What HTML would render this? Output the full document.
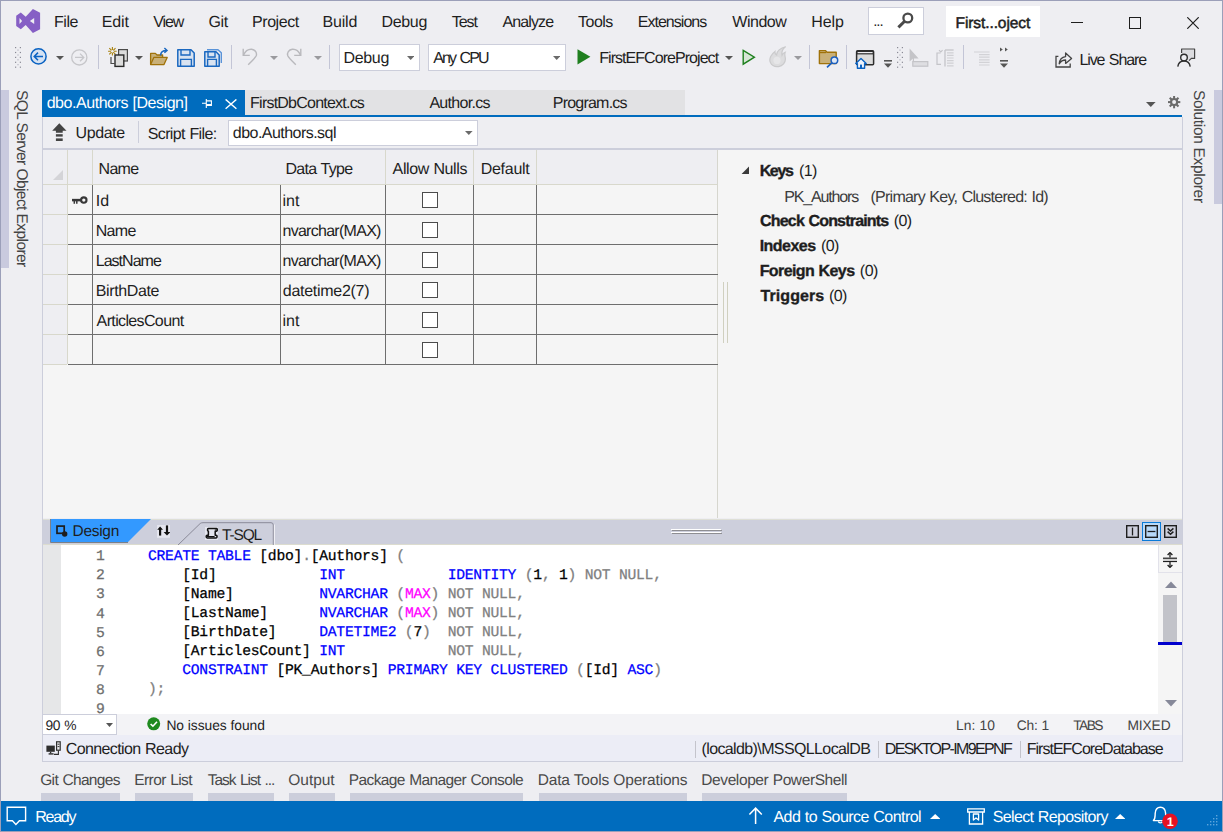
<!DOCTYPE html>
<html><head><meta charset="utf-8"><title>dbo.Authors [Design]</title>
<style>
html,body{margin:0;padding:0}
body{width:1223px;height:832px;overflow:hidden;background:#eeeef2;position:relative;font-family:"Liberation Sans",sans-serif}
.r{position:absolute;box-sizing:border-box}
.t{position:absolute;white-space:pre;font-family:"Liberation Sans",sans-serif;line-height:20px;text-rendering:geometricPrecision}
.m{position:absolute;white-space:pre;font-family:"Liberation Mono",monospace;text-rendering:geometricPrecision;-webkit-text-stroke:0.25px}
.kw{color:#0000ff}.g{color:#808080}.mg{color:#ff00ff}
</style></head><body>
<div class="r" style="left:0px;top:0px;width:1223px;height:832px;background:transparent;border:1px solid #9b9fb9;z-index:50;pointer-events:none;"></div>
<div class="r" style="left:1px;top:90px;width:8px;height:178px;background:#c9cade;"></div>
<div class="r" style="left:1214px;top:90px;width:8px;height:114px;background:#c9cade;"></div>
<div class="r" style="left:868px;top:7px;width:56px;height:28px;background:#ffffff;border:1px solid #cccedb;"></div>
<div class="r" style="left:946px;top:6px;width:94px;height:31px;background:#ffffff;"></div>
<div class="r" style="left:339px;top:44px;width:81px;height:27px;background:#ffffff;border:1px solid #cccedb;"></div>
<div class="r" style="left:428px;top:44px;width:138px;height:27px;background:#ffffff;border:1px solid #cccedb;"></div>
<div class="r" style="left:245px;top:90px;width:440px;height:25px;background:#e2e2e4;"></div>
<div class="r" style="left:42px;top:90px;width:203px;height:27px;background:#006cbe;"></div>
<div class="r" style="left:42px;top:115px;width:1140px;height:2px;background:#006cbe;"></div>
<div class="r" style="left:228px;top:120px;width:250px;height:26px;background:#ffffff;border:1px solid #cccedb;"></div>
<div class="r" style="left:138px;top:121px;width:1px;height:22px;background:#cccedb;"></div>
<div class="r" style="left:43px;top:150px;width:1139px;height:368px;background:#f5f5f5;"></div>
<div class="r" style="left:42px;top:148px;width:1141px;height:2px;background:#cccedb;"></div>
<div class="r" style="left:43px;top:150px;width:674px;height:34px;background:#eeeef2;"></div>
<div class="r" style="left:43px;top:184px;width:24px;height:180px;background:#eeeef2;"></div>
<div class="r" style="left:717px;top:150px;width:1px;height:368px;background:#d6d6ce;"></div>
<div class="r" style="left:722.5px;top:282px;width:1px;height:61px;background:#d0d0c0;"></div>
<div class="r" style="left:727px;top:282px;width:1px;height:61px;background:#d0d0c0;"></div>
<div class="r" style="left:43px;top:184px;width:674px;height:1px;background:#d8d8cc;"></div>
<div class="r" style="left:67px;top:150px;width:1px;height:34px;background:#d8d8cc;"></div>
<div class="r" style="left:92px;top:150px;width:1px;height:34px;background:#d8d8cc;"></div>
<div class="r" style="left:385px;top:150px;width:1px;height:34px;background:#d8d8cc;"></div>
<div class="r" style="left:473px;top:150px;width:1px;height:34px;background:#d8d8cc;"></div>
<div class="r" style="left:536px;top:150px;width:1px;height:34px;background:#d8d8cc;"></div>
<div class="r" style="left:67px;top:184px;width:1px;height:180px;background:#d8d8cc;"></div>
<div class="r" style="left:43px;top:214px;width:24px;height:1px;background:#d8d8cc;"></div>
<div class="r" style="left:68px;top:214px;width:650px;height:1px;background:#6e6e6e;"></div>
<div class="r" style="left:43px;top:244px;width:24px;height:1px;background:#d8d8cc;"></div>
<div class="r" style="left:68px;top:244px;width:650px;height:1px;background:#6e6e6e;"></div>
<div class="r" style="left:43px;top:274px;width:24px;height:1px;background:#d8d8cc;"></div>
<div class="r" style="left:68px;top:274px;width:650px;height:1px;background:#6e6e6e;"></div>
<div class="r" style="left:43px;top:304px;width:24px;height:1px;background:#d8d8cc;"></div>
<div class="r" style="left:68px;top:304px;width:650px;height:1px;background:#6e6e6e;"></div>
<div class="r" style="left:43px;top:334px;width:24px;height:1px;background:#d8d8cc;"></div>
<div class="r" style="left:68px;top:334px;width:650px;height:1px;background:#6e6e6e;"></div>
<div class="r" style="left:43px;top:364px;width:24px;height:1px;background:#d8d8cc;"></div>
<div class="r" style="left:68px;top:364px;width:650px;height:1px;background:#6e6e6e;"></div>
<div class="r" style="left:92px;top:185px;width:1px;height:180px;background:#6e6e6e;"></div>
<div class="r" style="left:280px;top:185px;width:1px;height:180px;background:#6e6e6e;"></div>
<div class="r" style="left:385px;top:185px;width:1px;height:180px;background:#6e6e6e;"></div>
<div class="r" style="left:473px;top:185px;width:1px;height:180px;background:#6e6e6e;"></div>
<div class="r" style="left:536px;top:185px;width:1px;height:180px;background:#6e6e6e;"></div>
<svg class="r" style="left:53px;top:170px;" width="11" height="11" viewBox="0 0 11 11"><path d="M10 0V10H0Z" fill="#d4d4d8"/></svg>
<div class="r" style="left:422px;top:192px;width:16px;height:16px;background:#ffffff;border:1px solid #4c4c4c;"></div>
<div class="r" style="left:422px;top:222px;width:16px;height:16px;background:#ffffff;border:1px solid #4c4c4c;"></div>
<div class="r" style="left:422px;top:252px;width:16px;height:16px;background:#ffffff;border:1px solid #4c4c4c;"></div>
<div class="r" style="left:422px;top:282px;width:16px;height:16px;background:#ffffff;border:1px solid #4c4c4c;"></div>
<div class="r" style="left:422px;top:312px;width:16px;height:16px;background:#ffffff;border:1px solid #4c4c4c;"></div>
<div class="r" style="left:422px;top:342px;width:16px;height:16px;background:#ffffff;border:1px solid #4c4c4c;"></div>
<div class="r" style="left:43px;top:519px;width:1139px;height:26px;background:#cdcfdc;"></div>
<div class="r" style="left:43px;top:519px;width:1139px;height:1px;background:#dedfd6;"></div>
<div class="r" style="left:43px;top:544px;width:1139px;height:1px;background:#dcdccf;"></div>
<svg class="r" style="left:50px;top:519px;" width="102" height="24" viewBox="0 0 102 24"><path d="M1 0H101L78 23H1Z" fill="#3399ff"/><path d="M0.5 0V23.5H78" fill="none" stroke="#7c8088" stroke-width="1"/></svg>
<svg class="r" style="left:176px;top:522px;" width="100" height="24" viewBox="0 0 100 24"><path d="M1 24L24.2 1.5Q25 0.7 27 0.7H95Q97.3 0.7 97.3 3V24" fill="none" stroke="#8a8a98" stroke-width="1"/><path d="M98.4 2.5V24" stroke="#f4f4f8" stroke-width="1"/></svg>
<div class="r" style="left:671px;top:529px;width:50px;height:1px;background:#ffffff;"></div>
<div class="r" style="left:672px;top:530px;width:50px;height:1px;background:#8e8e92;"></div>
<div class="r" style="left:671px;top:532px;width:50px;height:1px;background:#ffffff;"></div>
<div class="r" style="left:672px;top:533px;width:50px;height:1px;background:#8e8e92;"></div>
<div class="r" style="left:43px;top:545px;width:1139px;height:169px;background:#ffffff;"></div>
<div class="r" style="left:43px;top:545px;width:18px;height:169px;background:#e6e7e8;"></div>
<div class="r" style="left:1158px;top:545px;width:24px;height:169px;background:#f5f5f5;"></div>
<div class="r" style="left:1158px;top:545px;width:1px;height:28px;background:#e2e2ea;"></div>
<div class="r" style="left:1158px;top:572px;width:24px;height:1px;background:#e2e2ea;"></div>
<div class="r" style="left:1163px;top:595px;width:14px;height:47px;background:#c2c3c9;"></div>
<div class="r" style="left:1158px;top:642px;width:24px;height:3px;background:#0000cd;"></div>
<svg class="r" style="left:1165px;top:581px;" width="12" height="7" viewBox="0 0 12 7"><path d="M0 7L6 0.5L12 7Z" fill="#868999"/></svg>
<svg class="r" style="left:1165px;top:700px;" width="12" height="7" viewBox="0 0 12 7"><path d="M0 0L6 6.5L12 0Z" fill="#868999"/></svg>
<div class="r" style="left:43px;top:735px;width:1139px;height:26px;background:#ecedf6;"></div>
<div class="r" style="left:695px;top:741px;width:1px;height:17px;background:#c4c4cc;"></div>
<div class="r" style="left:878px;top:741px;width:1px;height:17px;background:#c4c4cc;"></div>
<div class="r" style="left:1020px;top:741px;width:1px;height:17px;background:#c4c4cc;"></div>
<div class="r" style="left:42px;top:117px;width:1141px;height:645px;background:transparent;border:1px solid #cccedb;border-top:none;z-index:20;"></div>
<div class="r" style="left:41px;top:793px;width:79px;height:8px;background:#cccedb;"></div>
<div class="r" style="left:135px;top:793px;width:58px;height:8px;background:#cccedb;"></div>
<div class="r" style="left:208px;top:793px;width:66px;height:8px;background:#cccedb;"></div>
<div class="r" style="left:289px;top:793px;width:46px;height:8px;background:#cccedb;"></div>
<div class="r" style="left:350px;top:793px;width:173px;height:8px;background:#cccedb;"></div>
<div class="r" style="left:539px;top:793px;width:148px;height:8px;background:#cccedb;"></div>
<div class="r" style="left:702px;top:793px;width:145px;height:8px;background:#cccedb;"></div>
<div class="r" style="left:0px;top:801px;width:1223px;height:31px;background:#006cbe;"></div>
<div class="t" style="left:53.92px;top:13px;font-size:16px;letter-spacing:-0.413px;color:#1e1e1e;">File</div>
<div class="t" style="left:101.72px;top:13px;font-size:16px;letter-spacing:-0.120px;color:#1e1e1e;">Edit</div>
<div class="t" style="left:153.22px;top:13px;font-size:16px;letter-spacing:-1.073px;color:#1e1e1e;">View</div>
<div class="t" style="left:208.40px;top:13px;font-size:16px;letter-spacing:-0.310px;color:#1e1e1e;">Git</div>
<div class="t" style="left:252.12px;top:13px;font-size:16px;letter-spacing:-0.467px;color:#1e1e1e;">Project</div>
<div class="t" style="left:322.52px;top:13px;font-size:16px;letter-spacing:-0.190px;color:#1e1e1e;">Build</div>
<div class="t" style="left:381.42px;top:13px;font-size:16px;letter-spacing:-0.320px;color:#1e1e1e;">Debug</div>
<div class="t" style="left:451.68px;top:13px;font-size:16px;letter-spacing:-1.027px;color:#1e1e1e;">Test</div>
<div class="t" style="left:502.40px;top:13px;font-size:16px;letter-spacing:-0.873px;color:#1e1e1e;">Analyze</div>
<div class="t" style="left:578.08px;top:13px;font-size:16px;letter-spacing:-0.545px;color:#1e1e1e;">Tools</div>
<div class="t" style="left:637.72px;top:13px;font-size:16px;letter-spacing:-0.967px;color:#1e1e1e;">Extensions</div>
<div class="t" style="left:732.32px;top:13px;font-size:16px;letter-spacing:-0.476px;color:#1e1e1e;">Window</div>
<div class="t" style="left:811.32px;top:13px;font-size:16px;letter-spacing:-0.087px;color:#1e1e1e;">Help</div>
<div class="t" style="left:873.15px;top:12px;font-size:15px;letter-spacing:-1.013px;color:#1e1e1e;">...</div>
<div class="t" style="left:955.56px;top:14px;font-size:15.5px;letter-spacing:-0.092px;color:#1e1e1e;-webkit-text-stroke:0.5px #1e1e1e;">First...oject</div>
<div class="t" style="left:343.62px;top:49px;font-size:16px;letter-spacing:-0.370px;color:#1e1e1e;">Debug</div>
<div class="t" style="left:433.20px;top:49px;font-size:16px;letter-spacing:-1.872px;word-spacing:1.872px;color:#1e1e1e;">Any CPU</div>
<div class="t" style="left:599.22px;top:49px;font-size:16px;letter-spacing:-0.949px;color:#1e1e1e;">FirstEFCoreProject</div>
<div class="t" style="left:1079.42px;top:51px;font-size:16px;letter-spacing:-1.095px;word-spacing:1.095px;color:#1e1e1e;">Live Share</div>
<div class="t" style="left:46.66px;top:94px;font-size:16px;letter-spacing:-0.449px;word-spacing:0.449px;color:#ffffff;">dbo.Authors [Design]</div>
<div class="t" style="left:250.12px;top:94px;font-size:16px;letter-spacing:-0.774px;color:#1e1e1e;">FirstDbContext.cs</div>
<div class="t" style="left:429.40px;top:94px;font-size:16px;letter-spacing:-0.695px;color:#1e1e1e;">Author.cs</div>
<div class="t" style="left:552.82px;top:94px;font-size:16px;letter-spacing:-0.789px;color:#1e1e1e;">Program.cs</div>
<div class="t" style="left:75.60px;top:124px;font-size:16px;letter-spacing:-0.432px;color:#1e1e1e;">Update</div>
<div class="t" style="left:147.68px;top:125px;font-size:16px;letter-spacing:-0.604px;word-spacing:0.604px;color:#1e1e1e;">Script File:</div>
<div class="t" style="left:232.86px;top:124px;font-size:16px;letter-spacing:-0.539px;color:#1e1e1e;">dbo.Authors.sql</div>
<div class="t" style="left:98.52px;top:160px;font-size:16px;letter-spacing:-0.673px;color:#1e1e1e;">Name</div>
<div class="t" style="left:285.42px;top:160px;font-size:16px;letter-spacing:-0.717px;word-spacing:0.717px;color:#1e1e1e;">Data Type</div>
<div class="t" style="left:392.60px;top:160px;font-size:16px;letter-spacing:-0.376px;word-spacing:0.376px;color:#1e1e1e;">Allow Nulls</div>
<div class="t" style="left:480.72px;top:160px;font-size:16px;letter-spacing:-0.280px;color:#1e1e1e;">Default</div>
<div class="t" style="left:95.66px;top:192px;font-size:16px;letter-spacing:0.140px;color:#1e1e1e;">Id</div>
<div class="t" style="left:282.46px;top:192px;font-size:16px;letter-spacing:0.070px;color:#1e1e1e;">int</div>
<div class="t" style="left:95.72px;top:222px;font-size:16px;letter-spacing:-0.707px;color:#1e1e1e;">Name</div>
<div class="t" style="left:282.46px;top:222px;font-size:16px;letter-spacing:-0.717px;color:#1e1e1e;">nvarchar(MAX)</div>
<div class="t" style="left:95.72px;top:252px;font-size:16px;letter-spacing:-0.966px;color:#1e1e1e;">LastName</div>
<div class="t" style="left:282.46px;top:252px;font-size:16px;letter-spacing:-0.717px;color:#1e1e1e;">nvarchar(MAX)</div>
<div class="t" style="left:95.72px;top:282px;font-size:16px;letter-spacing:-0.378px;color:#1e1e1e;">BirthDate</div>
<div class="t" style="left:282.86px;top:282px;font-size:16px;letter-spacing:-0.285px;color:#1e1e1e;">datetime2(7)</div>
<div class="t" style="left:96.60px;top:312px;font-size:16px;letter-spacing:-0.637px;color:#1e1e1e;">ArticlesCount</div>
<div class="t" style="left:282.46px;top:312px;font-size:16px;letter-spacing:0.070px;color:#1e1e1e;">int</div>
<div class="t" style="left:759.66px;top:162px;font-size:16px;letter-spacing:-1.353px;color:#1e1e1e;font-weight:bold;-webkit-text-stroke:0.35px #1e1e1e;">Keys</div>
<div class="t" style="left:799.04px;top:162px;font-size:16px;letter-spacing:-0.690px;color:#1e1e1e;">(1)</div>
<div class="t" style="left:784.22px;top:188px;font-size:16px;letter-spacing:-1.147px;color:#3c3c3c;">PK_Authors</div>
<div class="t" style="left:870.54px;top:188px;font-size:16px;letter-spacing:-0.755px;word-spacing:0.755px;color:#3c3c3c;">(Primary Key, Clustered: Id)</div>
<div class="t" style="left:760.06px;top:212px;font-size:16px;letter-spacing:-0.812px;word-spacing:0.812px;color:#1e1e1e;font-weight:bold;-webkit-text-stroke:0.35px #1e1e1e;">Check Constraints</div>
<div class="t" style="left:893.64px;top:212px;font-size:16px;letter-spacing:-0.490px;color:#1e1e1e;">(0)</div>
<div class="t" style="left:759.66px;top:237px;font-size:16px;letter-spacing:-0.520px;color:#1e1e1e;font-weight:bold;-webkit-text-stroke:0.35px #1e1e1e;">Indexes</div>
<div class="t" style="left:820.94px;top:237px;font-size:16px;letter-spacing:-0.540px;color:#1e1e1e;">(0)</div>
<div class="t" style="left:759.66px;top:262px;font-size:16px;letter-spacing:-0.598px;word-spacing:0.598px;color:#1e1e1e;font-weight:bold;-webkit-text-stroke:0.35px #1e1e1e;">Foreign Keys</div>
<div class="t" style="left:859.84px;top:262px;font-size:16px;letter-spacing:-0.490px;color:#1e1e1e;">(0)</div>
<div class="t" style="left:760.54px;top:287px;font-size:16px;letter-spacing:0.083px;color:#1e1e1e;font-weight:bold;-webkit-text-stroke:0.35px #1e1e1e;">Triggers</div>
<div class="t" style="left:829.04px;top:287px;font-size:16px;letter-spacing:-0.690px;color:#1e1e1e;">(0)</div>
<div class="t" style="left:30px;top:90px;font-size:15.5px;line-height:17px;letter-spacing:-0.57px;color:#444;transform-origin:0 0;transform:rotate(90deg)">SQL Server Object Explorer</div>
<div class="t" style="left:1206.5px;top:90px;font-size:15.5px;line-height:17px;letter-spacing:-0.31px;color:#444;transform-origin:0 0;transform:rotate(90deg)">Solution Explorer</div>
<div class="t" style="left:72.56px;top:522px;font-size:15.5px;letter-spacing:-0.307px;color:#1e1e1e;">Design</div>
<div class="t" style="left:222.09px;top:526px;font-size:15.5px;letter-spacing:-1.180px;color:#1e1e1e;">T-SQL</div>
<div class="m" style="left:148px;top:547px;font-size:14.7px;line-height:20px;letter-spacing:-0.2515px;color:#000"><span class="kw">CREATE TABLE</span> [dbo]<span class="g">.</span>[Authors] <span class="g">(</span></div>
<div class="m" style="left:61.3px;width:43.5px;text-align:right;top:547px;font-size:14.7px;line-height:20px;color:#6e6e6e">1</div>
<div class="m" style="left:148px;top:566px;font-size:14.7px;line-height:20px;letter-spacing:-0.2515px;color:#000">    [Id]            <span class="kw">INT            IDENTITY</span><span class="g"> (</span>1<span class="g">, </span>1<span class="g">) NOT NULL,</span></div>
<div class="m" style="left:61.3px;width:43.5px;text-align:right;top:566px;font-size:14.7px;line-height:20px;color:#6e6e6e">2</div>
<div class="m" style="left:148px;top:585px;font-size:14.7px;line-height:20px;letter-spacing:-0.2515px;color:#000">    [Name]          <span class="kw">NVARCHAR</span><span class="g"> (</span><span class="mg">MAX</span><span class="g">) NOT NULL,</span></div>
<div class="m" style="left:61.3px;width:43.5px;text-align:right;top:585px;font-size:14.7px;line-height:20px;color:#6e6e6e">3</div>
<div class="m" style="left:148px;top:604px;font-size:14.7px;line-height:20px;letter-spacing:-0.2515px;color:#000">    [LastName]      <span class="kw">NVARCHAR</span><span class="g"> (</span><span class="mg">MAX</span><span class="g">) NOT NULL,</span></div>
<div class="m" style="left:61.3px;width:43.5px;text-align:right;top:605px;font-size:14.7px;line-height:20px;color:#6e6e6e">4</div>
<div class="m" style="left:148px;top:623px;font-size:14.7px;line-height:20px;letter-spacing:-0.2515px;color:#000">    [BirthDate]     <span class="kw">DATETIME2</span><span class="g"> (</span>7<span class="g">)  NOT NULL,</span></div>
<div class="m" style="left:61.3px;width:43.5px;text-align:right;top:624px;font-size:14.7px;line-height:20px;color:#6e6e6e">5</div>
<div class="m" style="left:148px;top:642px;font-size:14.7px;line-height:20px;letter-spacing:-0.2515px;color:#000">    [ArticlesCount] <span class="kw">INT</span><span class="g">            NOT NULL,</span></div>
<div class="m" style="left:61.3px;width:43.5px;text-align:right;top:643px;font-size:14.7px;line-height:20px;color:#6e6e6e">6</div>
<div class="m" style="left:148px;top:661px;font-size:14.7px;line-height:20px;letter-spacing:-0.2515px;color:#000"><span class="kw">    CONSTRAINT</span> [PK_Authors] <span class="kw">PRIMARY KEY CLUSTERED</span><span class="g"> (</span>[Id] <span class="kw">ASC</span><span class="g">)</span></div>
<div class="m" style="left:61.3px;width:43.5px;text-align:right;top:662px;font-size:14.7px;line-height:20px;color:#6e6e6e">7</div>
<div class="m" style="left:148px;top:680px;font-size:14.7px;line-height:20px;letter-spacing:-0.2515px;color:#000"><span class="g">);</span></div>
<div class="m" style="left:61.3px;width:43.5px;text-align:right;top:681px;font-size:14.7px;line-height:20px;color:#6e6e6e">8</div>
<div class="m" style="left:148px;top:699px;font-size:14.7px;line-height:20px;letter-spacing:-0.2515px;color:#000"></div>
<div class="m" style="left:61.3px;width:43.5px;text-align:right;top:700px;font-size:14.7px;line-height:20px;color:#6e6e6e">9</div>
<div class="r" style="left:43px;top:714px;width:1139px;height:21px;background:#f3f3f6;"></div>
<div class="r" style="left:42px;top:714px;width:75px;height:21px;background:#ffffff;border:1px solid #cccedb;"></div>
<svg class="r" style="left:106px;top:723px;" width="7" height="4" viewBox="0 0 7 4"><path d="M0 0H7L3.5 4Z" fill="#555"/></svg>
<div class="t" style="left:45.38px;top:716px;font-size:13.8px;letter-spacing:-0.180px;word-spacing:0.180px;color:#1e1e1e;">90 %</div>
<div class="t" style="left:166.40px;top:716px;font-size:13.8px;letter-spacing:-0.043px;word-spacing:0.043px;color:#1e1e1e;">No issues found</div>
<div class="t" style="left:955.90px;top:716px;font-size:13.8px;letter-spacing:0.181px;word-spacing:-0.181px;color:#444;">Ln: 10</div>
<div class="t" style="left:1016.81px;top:716px;font-size:13.8px;letter-spacing:-0.224px;word-spacing:0.224px;color:#444;">Ch: 1</div>
<div class="t" style="left:1073.22px;top:716px;font-size:13.8px;letter-spacing:-1.552px;color:#444;">TABS</div>
<div class="t" style="left:1127.40px;top:716px;font-size:13.8px;letter-spacing:-0.113px;color:#444;">MIXED</div>
<div class="t" style="left:65.70px;top:740px;font-size:16px;letter-spacing:-0.599px;word-spacing:0.599px;color:#1e1e1e;">Connection Ready</div>
<div class="t" style="left:701.54px;top:740px;font-size:16px;letter-spacing:-0.618px;color:#1e1e1e;">(localdb)\MSSQLLocalDB</div>
<div class="t" style="left:884.72px;top:740px;font-size:16px;letter-spacing:-1.634px;color:#1e1e1e;">DESKTOP-IM9EPNF</div>
<div class="t" style="left:1026.72px;top:740px;font-size:16px;letter-spacing:-0.989px;color:#1e1e1e;">FirstEFCoreDatabase</div>
<div class="t" style="left:40.23px;top:771px;font-size:15.5px;letter-spacing:-0.651px;word-spacing:0.651px;color:#4a4a4a;">Git Changes</div>
<div class="t" style="left:134.26px;top:771px;font-size:15.5px;letter-spacing:-0.567px;word-spacing:0.567px;color:#4a4a4a;">Error List</div>
<div class="t" style="left:207.69px;top:771px;font-size:15.5px;letter-spacing:-0.987px;word-spacing:0.987px;color:#4a4a4a;">Task List ...</div>
<div class="t" style="left:288.30px;top:771px;font-size:15.5px;letter-spacing:-0.045px;color:#4a4a4a;">Output</div>
<div class="t" style="left:348.76px;top:771px;font-size:15.5px;letter-spacing:-0.603px;word-spacing:0.603px;color:#4a4a4a;">Package Manager Console</div>
<div class="t" style="left:537.76px;top:771px;font-size:15.5px;letter-spacing:-0.182px;word-spacing:0.182px;color:#4a4a4a;">Data Tools Operations</div>
<div class="t" style="left:701.26px;top:771px;font-size:15.5px;letter-spacing:-0.392px;word-spacing:0.392px;color:#4a4a4a;">Developer PowerShell</div>
<div class="t" style="left:35.22px;top:808px;font-size:16px;letter-spacing:-1.240px;color:#ffffff;">Ready</div>
<div class="t" style="left:773.50px;top:808px;font-size:16px;letter-spacing:-0.548px;word-spacing:0.548px;color:#ffffff;">Add to Source Control</div>
<div class="t" style="left:992.78px;top:808px;font-size:16px;letter-spacing:-0.643px;word-spacing:0.643px;color:#ffffff;">Select Repository</div>
<svg class="r" style="left:16px;top:9px;" width="25" height="25" viewBox="0 0 25 25"><path d="M16.9 0L24.1 3.8V20.2L16.9 24.1L9.7 15.9L4.8 20.2L0.2 16.9V6.8L4.8 3.5L9.7 7.7Z" fill="#865fc5"/><path d="M3.5 9.1L6.1 12L3.5 14.9Z" fill="#eeeef2"/><path d="M18.2 9.1L13.9 12L18.2 14.9Z" fill="#eeeef2"/></svg>
<svg class="r" style="left:897px;top:12px;" width="17" height="17" viewBox="0 0 17 17"><circle cx="10.8" cy="6" r="4.4" fill="none" stroke="#4a4a4a" stroke-width="2.3"/><path d="M7.6 9.2L1.4 15.4" stroke="#4a4a4a" stroke-width="3" stroke-linecap="butt"/></svg>
<div class="r" style="left:1071px;top:22px;width:12px;height:1px;background:#1e1e1e;"></div>
<div class="r" style="left:1129px;top:17px;width:12px;height:12px;background:transparent;border:1.2px solid #1e1e1e;"></div>
<svg class="r" style="left:1187px;top:17px;" width="12" height="12" viewBox="0 0 12 12"><path d="M0.3 0.3L11.7 11.7M11.7 0.3L0.3 11.7" stroke="#1e1e1e" stroke-width="1.2"/></svg>
<svg class="r" style="left:15px;top:47px;" width="6" height="22" viewBox="0 0 6 22"><rect x="0" y="0.0" width="1.2" height="1.2" fill="#8a8a96"/><rect x="4.8" y="0.0" width="1.2" height="1.2" fill="#8a8a96"/><rect x="2.4" y="2.5" width="1.2" height="1.2" fill="#b4b4c0"/><rect x="0" y="4.9" width="1.2" height="1.2" fill="#8a8a96"/><rect x="4.8" y="4.9" width="1.2" height="1.2" fill="#8a8a96"/><rect x="2.4" y="7.4" width="1.2" height="1.2" fill="#b4b4c0"/><rect x="0" y="9.8" width="1.2" height="1.2" fill="#8a8a96"/><rect x="4.8" y="9.8" width="1.2" height="1.2" fill="#8a8a96"/><rect x="2.4" y="12.2" width="1.2" height="1.2" fill="#b4b4c0"/><rect x="0" y="14.7" width="1.2" height="1.2" fill="#8a8a96"/><rect x="4.8" y="14.7" width="1.2" height="1.2" fill="#8a8a96"/><rect x="2.4" y="17.1" width="1.2" height="1.2" fill="#b4b4c0"/><rect x="0" y="19.6" width="1.2" height="1.2" fill="#8a8a96"/><rect x="4.8" y="19.6" width="1.2" height="1.2" fill="#8a8a96"/></svg>
<svg class="r" style="left:29px;top:47px;" width="19" height="19" viewBox="0 0 19 19"><circle cx="9.5" cy="9.4" r="7.6" fill="#d5e2f3" stroke="#0a62c2" stroke-width="1.5"/><path d="M14 9.4H5.5M9 5.6L5.2 9.4L9 13.2" fill="none" stroke="#0a62c2" stroke-width="1.5"/></svg>
<svg class="r" style="left:56px;top:56px;" width="8" height="4" viewBox="0 0 8 4"><path d="M0 0H8L4.0 4Z" fill="#555555"/></svg>
<svg class="r" style="left:70px;top:48px;" width="19" height="19" viewBox="0 0 19 19"><circle cx="9.3" cy="9.4" r="7.6" fill="none" stroke="#c6c6ca" stroke-width="1.3"/><path d="M5 9.4H13.5M10 5.6L13.8 9.4L10 13.2" fill="none" stroke="#c6c6ca" stroke-width="1.3"/></svg>
<div class="r" style="left:98px;top:45px;width:1px;height:24px;background:#c3c5d6;"></div>
<svg class="r" style="left:107px;top:46px;" width="22" height="22" viewBox="0 0 22 22"><g stroke="#a8800c" stroke-width="1.1"><path d="M5.4 1V9.6M1.1 5.3H9.7M2.3 2.2L8.5 8.4M8.5 2.2L2.3 8.4"/></g><circle cx="5.4" cy="5.3" r="1.4" fill="#eeeef2"/>
<rect x="11.6" y="3.6" width="8.8" height="11.4" fill="#dcdcdc" stroke="#4a4a4a" stroke-width="1.2"/>
<rect x="8" y="9" width="8.8" height="11.4" fill="#dcdcdc" stroke="#2a2a2a" stroke-width="1.4"/>
<path d="M4 11V17.5H8" fill="none" stroke="#4a4a4a" stroke-width="1.2"/></svg>
<svg class="r" style="left:135px;top:56px;" width="8" height="4" viewBox="0 0 8 4"><path d="M0 0H8L4.0 4Z" fill="#555555"/></svg>
<svg class="r" style="left:149px;top:47px;" width="20" height="20" viewBox="0 0 20 20"><path d="M1.6 17.6V6.4H6.4L8 8H13.6V10.4" fill="#c9b078" stroke="#a0720a" stroke-width="1.3" stroke-linejoin="round"/>
<path d="M1.6 17.6L4.8 10.4H18.2L15 17.6Z" fill="#c9b078" stroke="#a0720a" stroke-width="1.3" stroke-linejoin="round"/>
<path d="M11.6 8.4C11.6 4.6 14 3.4 17.6 3.4M15.4 1L18 3.4L15.4 5.8" fill="none" stroke="#1b68c0" stroke-width="1.5"/></svg>
<svg class="r" style="left:177px;top:49px;" width="18" height="18" viewBox="0 0 18 18"><path d="M0.8 0.8H14L17.2 4V17.2H0.8Z" fill="#d9e3f1" stroke="#1b68c0" stroke-width="1.5" stroke-linejoin="round"/><path d="M4 0.8V6H13V0.8" fill="none" stroke="#1b68c0" stroke-width="1.4"/><path d="M3.6 17.2V10.4H14.4V17.2" fill="none" stroke="#1b68c0" stroke-width="1.4"/></svg>
<svg class="r" style="left:206px;top:49px;" width="16" height="16" viewBox="0 0 16 16"><path d="M1 0.7H12L15.3 3.8V14" fill="none" stroke="#5a93d8" stroke-width="1.4" stroke-linejoin="round"/></svg>
<svg class="r" style="left:204px;top:51px;" width="16" height="16" viewBox="0 0 16 16"><path d="M0.8 0.8H12L15.2 4V15.2H0.8Z" fill="#d9e3f1" stroke="#1b68c0" stroke-width="1.5" stroke-linejoin="round"/><path d="M4 0.8V6H11V0.8" fill="none" stroke="#1b68c0" stroke-width="1.4"/><path d="M3.6 15.2V8.4H12.4V15.2" fill="none" stroke="#1b68c0" stroke-width="1.4"/></svg>
<div class="r" style="left:231px;top:45px;width:1px;height:24px;background:#c3c5d6;"></div>
<svg class="r" style="left:242px;top:48px;" width="16" height="18" viewBox="0 0 16 18"><path d="M1.2 0.8V7.4H7.8" fill="none" stroke="#b9b9bd" stroke-width="1.4"/><path d="M1.6 7C3.2 3.2 6.4 1 9.6 1.2C13.4 1.6 15.2 5 14.2 7.8C13.4 9.8 9.4 13.6 6.2 16.8" fill="none" stroke="#b9b9bd" stroke-width="1.4"/></svg>
<svg class="r" style="left:270px;top:56px;" width="8" height="4" viewBox="0 0 8 4"><path d="M0 0H8L4.0 4Z" fill="#9a9a9e"/></svg>
<svg class="r" style="left:286px;top:48px;" width="16" height="18" viewBox="0 0 16 18"><g transform="translate(16,0) scale(-1,1)"><path d="M1.2 0.8V7.4H7.8" fill="none" stroke="#b9b9bd" stroke-width="1.4"/><path d="M1.6 7C3.2 3.2 6.4 1 9.6 1.2C13.4 1.6 15.2 5 14.2 7.8C13.4 9.8 9.4 13.6 6.2 16.8" fill="none" stroke="#b9b9bd" stroke-width="1.4"/></g></svg>
<svg class="r" style="left:314px;top:56px;" width="8" height="4" viewBox="0 0 8 4"><path d="M0 0H8L4.0 4Z" fill="#9a9a9e"/></svg>
<div class="r" style="left:329px;top:45px;width:1px;height:24px;background:#c3c5d6;"></div>
<svg class="r" style="left:407px;top:56px;" width="7.4" height="4" viewBox="0 0 7.4 4"><path d="M0 0H7.4L3.7 4Z" fill="#6a6a6a"/></svg>
<svg class="r" style="left:553px;top:56px;" width="7.4" height="4" viewBox="0 0 7.4 4"><path d="M0 0H7.4L3.7 4Z" fill="#6a6a6a"/></svg>
<svg class="r" style="left:577px;top:49px;" width="14" height="16" viewBox="0 0 14 16"><path d="M0.5 0.2L13.4 7.8L0.5 15.6Z" fill="#1f7f1f"/></svg>
<svg class="r" style="left:725px;top:56px;" width="8" height="4" viewBox="0 0 8 4"><path d="M0 0H8L4.0 4Z" fill="#555555"/></svg>
<svg class="r" style="left:742px;top:49px;" width="14" height="17" viewBox="0 0 14 17"><path d="M1.2 1.4L12.4 8.2L1.2 15.2Z" fill="#d6e6d6" stroke="#1f801f" stroke-width="1.4" stroke-linejoin="miter"/></svg>
<svg class="r" style="left:769px;top:46px;" width="19" height="22" viewBox="0 0 19 22"><path d="M16.6 0.8C11.6 1.8 7.4 5.4 7.6 9C6.2 8.2 5.8 6.6 6 5.4C2.4 8 -0.4 12.6 1.4 16.6C3 20 6.6 21 9.6 20.6C13.6 20 16.6 16.8 16.4 12.6C16.2 10.2 15.2 8.6 16.2 6.2C14.6 6.8 13.6 7.8 13 9.2C12.4 6.2 13.6 3 16.6 0.8Z" fill="#dcdcde" stroke="#cacacc" stroke-width="1.2"/><circle cx="8" cy="14.4" r="3.6" fill="#e6e6e8"/></svg>
<svg class="r" style="left:794px;top:56px;" width="8" height="4" viewBox="0 0 8 4"><path d="M0 0H8L4.0 4Z" fill="#9a9a9e"/></svg>
<div class="r" style="left:809px;top:45px;width:1px;height:24px;background:#c3c5d6;"></div>
<svg class="r" style="left:818px;top:49px;" width="22" height="19" viewBox="0 0 22 19"><path d="M1.4 14.6V1.6H7.4L9 3.2H18.2V14.6Z" fill="#c9b078" stroke="#a0720a" stroke-width="1.4" stroke-linejoin="round"/><path d="M1.4 3.6H8" stroke="#a0720a" stroke-width="1.2"/>
<circle cx="16.4" cy="11.2" r="3.3" fill="#dfe8f5" stroke="#1b5fc0" stroke-width="1.5"/><path d="M14 13.6L9 18.4" stroke="#1b5fc0" stroke-width="1.7"/></svg>
<div class="r" style="left:846px;top:45px;width:1px;height:24px;background:#c3c5d6;"></div>
<svg class="r" style="left:855px;top:49px;" width="20" height="20" viewBox="0 0 20 20"><rect x="1.6" y="1.8" width="17" height="14" rx="1" fill="#dcdcdc" stroke="#2e2e2e" stroke-width="1.5"/><rect x="1.6" y="1.8" width="17" height="3.6" fill="#2e2e2e"/><rect x="2.6" y="3" width="15" height="1.2" fill="#eeeef2"/>
<path d="M0.8 14.6L6 9.6L11.2 14.6H9.6V19.2H2.4V14.6Z" fill="#eef3fb" stroke="#0a62c2" stroke-width="1.4" stroke-linejoin="round"/><rect x="5" y="15.6" width="2" height="3.4" fill="#0a62c2"/></svg>
<svg class="r" style="left:884px;top:60px;" width="8" height="8" viewBox="0 0 8 8"><rect x="0" y="0" width="8" height="1.6" fill="#555"/><path d="M0 3.6H8L4 7.8Z" fill="#555"/></svg>
<svg class="r" style="left:897px;top:47px;" width="6" height="21" viewBox="0 0 6 21"><rect x="0" y="0.0" width="1.2" height="1.2" fill="#8a8a96"/><rect x="4.8" y="0.0" width="1.2" height="1.2" fill="#8a8a96"/><rect x="2.4" y="2.5" width="1.2" height="1.2" fill="#b4b4c0"/><rect x="0" y="4.9" width="1.2" height="1.2" fill="#8a8a96"/><rect x="4.8" y="4.9" width="1.2" height="1.2" fill="#8a8a96"/><rect x="2.4" y="7.4" width="1.2" height="1.2" fill="#b4b4c0"/><rect x="0" y="9.8" width="1.2" height="1.2" fill="#8a8a96"/><rect x="4.8" y="9.8" width="1.2" height="1.2" fill="#8a8a96"/><rect x="2.4" y="12.2" width="1.2" height="1.2" fill="#b4b4c0"/><rect x="0" y="14.7" width="1.2" height="1.2" fill="#8a8a96"/><rect x="4.8" y="14.7" width="1.2" height="1.2" fill="#8a8a96"/><rect x="2.4" y="17.1" width="1.2" height="1.2" fill="#b4b4c0"/><rect x="0" y="19.6" width="1.2" height="1.2" fill="#8a8a96"/><rect x="4.8" y="19.6" width="1.2" height="1.2" fill="#8a8a96"/></svg>
<svg class="r" style="left:909px;top:48px;" width="20" height="19" viewBox="0 0 20 19"><path d="M0.6 0.6V13.4L4 10.4H9.6Z" fill="#c4c4c8"/><rect x="3.8" y="13.6" width="15" height="4.6" fill="#dedee2" stroke="#c4c4c8" stroke-width="1.2"/><path d="M4.4 9V13.6" stroke="#c4c4c8" stroke-width="1.2"/></svg>
<svg class="r" style="left:936px;top:49px;" width="18" height="18" viewBox="0 0 18 18"><path d="M4.6 4H1V15.4H5" fill="none" stroke="#c4c4c8" stroke-width="1.2"/><path d="M3 1.2L4.8 3L6.6 1.2" fill="none" stroke="#c4c4c8" stroke-width="1.1"/><path d="M9 1V17.4" stroke="#c4c4c8" stroke-width="1.3"/><path d="M9 1H17.6" stroke="#c4c4c8" stroke-width="1.3"/><g stroke="#d0d0d4" stroke-width="1.2"><path d="M11 3.8H17.6M11 6.4H17.6M11 9H17.6M11 11.6H17.6M11 14.2H17.6M11 16.8H17.6"/></g></svg>
<div class="r" style="left:963px;top:45px;width:1px;height:24px;background:#c3c5d6;"></div>
<svg class="r" style="left:974px;top:51px;" width="16" height="15" viewBox="0 0 16 15"><g stroke="#d2d2d6" stroke-width="1.2"><path d="M0 1H15.6M5 3.6H15.6M5 6.2H15.6M5 8.8H15.6M5 11.4H15.6M5 14H15.6"/></g></svg>
<svg class="r" style="left:1000px;top:47px;" width="8" height="21" viewBox="0 0 8 21"><path d="M0 0.4L2.8 2.4L0 4.4ZM5 0.4L7.8 2.4L5 4.4Z" fill="#555"/><rect x="0" y="13" width="8" height="1.6" fill="#555"/><path d="M0 16.6H8L4 20.8Z" fill="#555"/></svg>
<svg class="r" style="left:1055px;top:51px;" width="18" height="17" viewBox="0 0 18 17"><path d="M3.4 5.4H1V16H15.2V12.4" fill="none" stroke="#444" stroke-width="1.3"/><path d="M4.2 12.8C4.6 8.6 7.2 6 10.6 5.6V2L16.6 7.4L10.6 12.4V9C8 9 5.8 10.2 4.2 12.8Z" fill="none" stroke="#444" stroke-width="1.3" stroke-linejoin="round"/></svg>
<svg class="r" style="left:1177px;top:48px;" width="19" height="19" viewBox="0 0 19 19"><path d="M4.6 5V1H17.6V10.4H14.4L12 12.6" fill="#dcdce0" stroke="#444" stroke-width="1.2" stroke-linejoin="round"/><circle cx="7" cy="9.6" r="3.3" fill="#eeeef2" stroke="#2e2e2e" stroke-width="1.4"/><path d="M0.8 18.6C1.4 14.6 4 13 7 13C10 13 12.6 14.6 13.2 18.6" fill="none" stroke="#2e2e2e" stroke-width="1.4"/></svg>
<svg class="r" style="left:202px;top:99px;" width="11" height="9" viewBox="0 0 11 9"><path d="M0 4.3H4.3M4.3 0V8.9M4.3 1.9H9.4V6.5H4.3M4.3 5.5H9.4" fill="none" stroke="#fff" stroke-width="1.1"/></svg>
<svg class="r" style="left:225px;top:99px;" width="12" height="11" viewBox="0 0 12 11"><path d="M0.6 0.4L11.4 9.8M11.4 0.4L0.6 9.8" stroke="#fff" stroke-width="1.4"/></svg>
<svg class="r" style="left:1146px;top:102px;" width="9.6" height="5" viewBox="0 0 9.6 5"><path d="M0 0H9.6L4.8 5Z" fill="#555"/></svg>
<svg class="r" style="left:1168px;top:96px;" width="13" height="13" viewBox="0 0 13 13"><rect x="5.1" y="-0.1" width="2" height="12.4" fill="#6a6a6a" transform="rotate(0 6.1 6.1)"/><rect x="5.1" y="-0.1" width="2" height="12.4" fill="#6a6a6a" transform="rotate(45 6.1 6.1)"/><rect x="5.1" y="-0.1" width="2" height="12.4" fill="#6a6a6a" transform="rotate(90 6.1 6.1)"/><rect x="5.1" y="-0.1" width="2" height="12.4" fill="#6a6a6a" transform="rotate(135 6.1 6.1)"/><circle cx="6.1" cy="6.1" r="4.1" fill="#6a6a6a"/><circle cx="6.1" cy="6.1" r="2" fill="#eeeef2"/></svg>
<svg class="r" style="left:52px;top:123px;" width="15" height="19" viewBox="0 0 15 19"><path d="M7.3 0.3L14.5 7.8H10.7V9.8H3.9V7.8H0.2Z" fill="#444"/><rect x="3.9" y="11.2" width="6.8" height="2.4" fill="#444"/><rect x="3.9" y="15.4" width="6.8" height="2.6" fill="#444"/></svg>
<svg class="r" style="left:465px;top:131px;" width="7.6" height="4" viewBox="0 0 7.6 4"><path d="M0 0H7.6L3.8 4Z" fill="#6a6a6a"/></svg>
<svg class="r" style="left:72px;top:196px;" width="16" height="9" viewBox="0 0 16 9"><circle cx="11.8" cy="4.1" r="2.7" fill="none" stroke="#383838" stroke-width="2.1"/><path d="M0 4.1H9" stroke="#383838" stroke-width="2.5"/><path d="M2.3 4V7.8M4.8 4V7.8" stroke="#383838" stroke-width="1.5"/></svg>
<svg class="r" style="left:741px;top:166px;" width="9" height="9" viewBox="0 0 9 9"><path d="M8 0.6V8H0.6Z" fill="#3a3a3a"/></svg>
<svg class="r" style="left:55px;top:524px;" width="14" height="14" viewBox="0 0 14 14"><rect x="2" y="2.1" width="7.2" height="7.2" fill="none" stroke="#1e1e1e" stroke-width="1.7"/><circle cx="9.7" cy="10" r="2.7" fill="#1e1e1e"/></svg>
<svg class="r" style="left:156.7px;top:525px;" width="13.6" height="12.8" viewBox="0 0 13.6 12.8"><rect width="13.6" height="12.8" fill="#e4e5ee"/><path d="M3.1 10.6V3" stroke="#111" stroke-width="2.2"/><path d="M0.2 4.8L3.1 1.5L6 4.8Z" fill="#111"/><path d="M10 0.4V8" stroke="#111" stroke-width="2.2"/><path d="M6.6 7L10 10.5L13.4 7Z" fill="#111"/></svg>
<svg class="r" style="left:205px;top:527px;" width="13.4" height="13" viewBox="0 0 13.4 13"><rect width="13.4" height="13" fill="#e4e5ee"/><path d="M3.4 1.6H11.4C12.6 1.6 12.6 4.2 11.4 4.2H10.2V8.2H11.2C12.4 8.2 12.4 11 11.2 11H2.2C0.8 11 0.8 8.2 2.2 8.2H3.4V4.2C2.2 4.2 2.2 1.6 3.4 1.6Z" fill="#e4e5ee" stroke="#111" stroke-width="1.5" stroke-linejoin="round"/><path d="M2 9.6H9.6" stroke="#111" stroke-width="1.2"/><path d="M9.8 3H11.6" stroke="#111" stroke-width="1.1"/></svg>
<div class="r" style="left:1142px;top:522px;width:19px;height:19px;background:#b8d8f8;border:1px solid #0a7ad8;"></div>
<svg class="r" style="left:1126px;top:525px;" width="13" height="13" viewBox="0 0 13 13"><rect x="0.7" y="0.7" width="11.6" height="11.6" fill="none" stroke="#1e1e1e" stroke-width="1.4"/><path d="M6.5 2.6V10.4" stroke="#1e1e1e" stroke-width="1.3"/></svg>
<svg class="r" style="left:1145px;top:525px;" width="13" height="13" viewBox="0 0 13 13"><rect x="0.7" y="0.7" width="11.6" height="11.6" fill="none" stroke="#1e1e1e" stroke-width="1.4"/><path d="M2.6 6.5H10.4" stroke="#1e1e1e" stroke-width="1.3"/></svg>
<svg class="r" style="left:1164px;top:525px;" width="13" height="13" viewBox="0 0 13 13"><rect x="0.7" y="0.7" width="11.6" height="11.6" fill="none" stroke="#1e1e1e" stroke-width="1.4"/><path d="M3.6 3.4L6.5 6L9.4 3.4M3.6 6.6L6.5 9.2L9.4 6.6" fill="none" stroke="#1e1e1e" stroke-width="1.5"/></svg>
<svg class="r" style="left:1163px;top:552px;" width="14" height="16" viewBox="0 0 14 16"><rect x="0" y="5.6" width="14" height="1.3" fill="#1e1e1e"/><rect x="0" y="8.8" width="14" height="1.3" fill="#1e1e1e"/><rect x="0" y="6.9" width="14" height="1.9" fill="#d0d0d0"/><path d="M7 1V5.6M7 10V15" stroke="#1e1e1e" stroke-width="1.3"/><path d="M4.6 3L7 0.6L9.4 3M4.6 13L7 15.4L9.4 13" fill="none" stroke="#1e1e1e" stroke-width="1.3"/></svg>
<svg class="r" style="left:147px;top:717px;" width="14" height="14" viewBox="0 0 14 14"><circle cx="6.7" cy="6.8" r="6.5" fill="#1f8a1f"/><path d="M3.6 7L5.9 9.2L10 4.8" fill="none" stroke="#fff" stroke-width="1.6"/></svg>
<svg class="r" style="left:46px;top:741px;" width="15" height="15" viewBox="0 0 15 15"><rect x="0.4" y="4.6" width="8.4" height="6.2" fill="#2e2e2e"/><rect x="2.6" y="12.2" width="5" height="1.4" fill="#2e2e2e"/><path d="M4.6 10.8V12.4" stroke="#2e2e2e" stroke-width="1.4"/><rect x="10.6" y="0.8" width="3.6" height="8.4" fill="#eeeef2" stroke="#2e2e2e" stroke-width="1.2"/><path d="M11.6 3.2H13.4M11.6 5.6H13.4" stroke="#2e2e2e" stroke-width="1"/><path d="M12.4 9.4V13.4H8" fill="none" stroke="#2e2e2e" stroke-width="1.1"/></svg>
<svg class="r" style="left:6px;top:806px;" width="21" height="20" viewBox="0 0 21 20"><path d="M1.2 1.2H19.6V14.8H13.4L9.9 18.4L6.4 14.8H1.2Z" fill="none" stroke="#fff" stroke-width="1.4" stroke-linejoin="miter"/></svg>
<svg class="r" style="left:748px;top:807px;" width="16" height="18" viewBox="0 0 16 18"><path d="M7.6 17V1.4M1.4 7.6L7.6 1.2L13.8 7.6" fill="none" stroke="#fff" stroke-width="1.5"/></svg>
<svg class="r" style="left:929.5px;top:814.3px;" width="10.4" height="5" viewBox="0 0 10.4 5"><path d="M0 5H10.4L5.2 0Z" fill="#fff"/></svg>
<svg class="r" style="left:1114.7px;top:814.3px;" width="10.4" height="5" viewBox="0 0 10.4 5"><path d="M0 5H10.4L5.2 0Z" fill="#fff"/></svg>
<svg class="r" style="left:967px;top:808px;" width="18" height="17" viewBox="0 0 18 17"><path d="M0.7 0.8H17.3V4H0.7Z" fill="none" stroke="#fff" stroke-width="1.3"/><path d="M2.4 4V16H15.6V4" fill="none" stroke="#fff" stroke-width="1.3"/><path d="M6.4 6V12L9 10L11.6 12V6Z" fill="none" stroke="#fff" stroke-width="1.3" stroke-linejoin="round"/></svg>
<svg class="r" style="left:1152px;top:806px;" width="17" height="18" viewBox="0 0 17 18"><path d="M1.4 14.6C3.4 13 3 10.4 3.2 7.4C3.4 3.6 5.6 1.2 8.4 1.2C11.2 1.2 13.4 3.6 13.6 7.4C13.8 10.4 13.4 13 15.4 14.6Z" fill="none" stroke="#fff" stroke-width="1.4" stroke-linejoin="round"/><path d="M6.4 15.4C6.6 17.4 10.2 17.4 10.4 15.4" fill="none" stroke="#fff" stroke-width="1.3"/></svg>
<svg class="r" style="left:1162px;top:813px;" width="16" height="16" viewBox="0 0 16 16"><circle cx="8" cy="8.2" r="7.8" fill="#e81123"/></svg>
<div class="t" style="left:1166.85px;top:812px;font-size:12.5px;letter-spacing:0.000px;color:#ffffff;font-weight:bold;">1</div>
<svg class="r" style="left:1207px;top:815px;" width="11" height="11" viewBox="0 0 11 11"><rect x="9" y="0" width="1.4" height="1.4" fill="#5ea6dc"/><rect x="6" y="3" width="1.4" height="1.4" fill="#5ea6dc"/><rect x="9" y="3" width="1.4" height="1.4" fill="#5ea6dc"/><rect x="3" y="6" width="1.4" height="1.4" fill="#5ea6dc"/><rect x="6" y="6" width="1.4" height="1.4" fill="#5ea6dc"/><rect x="9" y="6" width="1.4" height="1.4" fill="#5ea6dc"/><rect x="0" y="9" width="1.4" height="1.4" fill="#5ea6dc"/><rect x="3" y="9" width="1.4" height="1.4" fill="#5ea6dc"/><rect x="6" y="9" width="1.4" height="1.4" fill="#5ea6dc"/><rect x="9" y="9" width="1.4" height="1.4" fill="#5ea6dc"/></svg>
</body></html>
